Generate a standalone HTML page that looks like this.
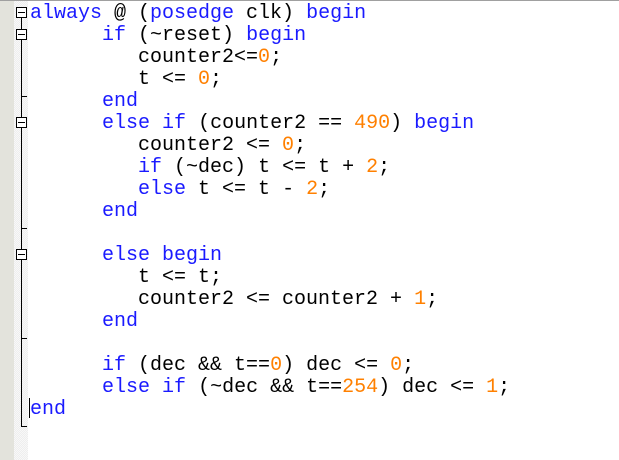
<!DOCTYPE html>
<html><head><style>
body{margin:0;width:619px;height:460px;background:#fff;position:relative;overflow:hidden;font-family:"Liberation Mono",monospace;}
.g1{position:absolute;left:0;top:0;width:14px;height:460px;background:#e3e3dc;}
.g2{position:absolute;left:14px;top:0;width:14px;height:460px;background:repeating-conic-gradient(#eeeeee 0 25%,#f8f8f8 0 50%) 0 0/2px 2px;}
.top{position:absolute;left:0;top:0;width:619px;height:1px;background:#a0a0a0;}
.vl{position:absolute;left:21px;width:1px;background:#000;}
.tk{position:absolute;left:21px;width:6px;height:1px;background:#000;}
.bx{position:absolute;left:16px;width:11px;height:11px;border:1px solid #000;background:#fff;box-sizing:border-box;}
.bx:after{content:"";position:absolute;left:1px;top:4px;width:7px;height:1px;background:#000;}
pre{position:absolute;left:30px;top:3px;margin:0;font-family:"Liberation Mono",monospace;font-size:20px;line-height:22px;color:#000;}
.k{color:#1a1aff}.n{color:#ff8000}
.cur{position:absolute;left:29px;top:398px;width:1px;height:20px;background:#000;}
</style></head><body>
<div class="g1"></div><div class="g2"></div><div class="top"></div>
<div class="vl" style="top:17px;height:410px"></div>
<div class="tk" style="top:96px"></div>
<div class="tk" style="top:228px"></div>
<div class="tk" style="top:338px"></div>
<div class="tk" style="top:426px"></div>
<div class="bx" style="top:7px"></div>
<div class="bx" style="top:29px"></div>
<div class="bx" style="top:117px"></div>
<div class="bx" style="top:249px"></div>
<pre><span class="k">always</span> @ (<span class="k">posedge</span> clk) <span class="k">begin</span>
      <span class="k">if</span> (~reset) <span class="k">begin</span>
         counter2&lt;=<span class="n">0</span>;
         t &lt;= <span class="n">0</span>;
      <span class="k">end</span>
      <span class="k">else</span> <span class="k">if</span> (counter2 == <span class="n">490</span>) <span class="k">begin</span>
         counter2 &lt;= <span class="n">0</span>;
         <span class="k">if</span> (~dec) t &lt;= t + <span class="n">2</span>;
         <span class="k">else</span> t &lt;= t - <span class="n">2</span>;
      <span class="k">end</span>

      <span class="k">else</span> <span class="k">begin</span>
         t &lt;= t;
         counter2 &lt;= counter2 + <span class="n">1</span>;
      <span class="k">end</span>

      <span class="k">if</span> (dec &amp;&amp; t==<span class="n">0</span>) dec &lt;= <span class="n">0</span>;
      <span class="k">else</span> <span class="k">if</span> (~dec &amp;&amp; t==<span class="n">254</span>) dec &lt;= <span class="n">1</span>;
<span class="k">end</span></pre>
<div class="cur"></div>
</body></html>
